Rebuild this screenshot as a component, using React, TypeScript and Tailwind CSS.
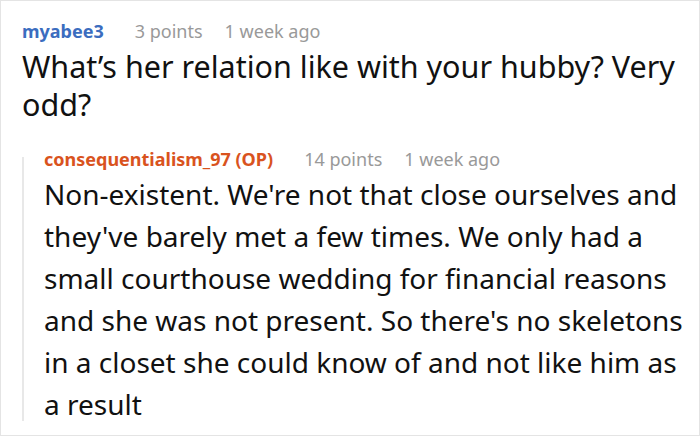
import React from "react";

type Meta = {
  name: string;
  nameColor: string;
  points: string;
  time: string;
};

function MetaLine({ name, nameColor, points, time }: Meta) {
  return (
    <div className="flex items-baseline text-[18px] leading-[24px] whitespace-nowrap">
      <span className={`font-bold ${nameColor}`}>{name}</span>
      <span className="ml-[31px] text-[#999999]">{points}</span>
      <span className="ml-[22px] text-[#999999]">{time}</span>
    </div>
  );
}

export default function App() {
  return (
    <div
      className="w-[700px] h-[436px] overflow-hidden bg-white border border-[#e4e4e4] pl-[21px] pt-[18px] text-[#111111]"
      style={{ fontFamily: '"Noto Sans", "Open Sans", sans-serif' }}
    >
      <MetaLine
        name="myabee3"
        nameColor="text-[#3b6dbf]"
        points="3 points"
        time="1 week ago"
      />
      <p className="mt-[4px] text-[30.5px] leading-[38px]">
        What’s her relation like with your hubby? Very odd?
      </p>

      <div className="flex mt-[24px]">
        <div className="w-[2px] bg-[#e8e8e8] mt-[10px] mb-[4px] shrink-0" />
        <div className="pl-[20px]">
          <MetaLine
            name="consequentialism_97 (OP)"
            nameColor="text-[#d9531e]"
            points="14 points"
            time="1 week ago"
          />
          <p className="mt-[2px] text-[28px] leading-[42px]">
            Non-existent. We're not that close ourselves and they've barely
            met a few times. We only had a small courthouse wedding for
            financial reasons and she was not present. So there's no skeletons
            in a closet she could know of and not like him as a result
          </p>
        </div>
      </div>
    </div>
  );
}
